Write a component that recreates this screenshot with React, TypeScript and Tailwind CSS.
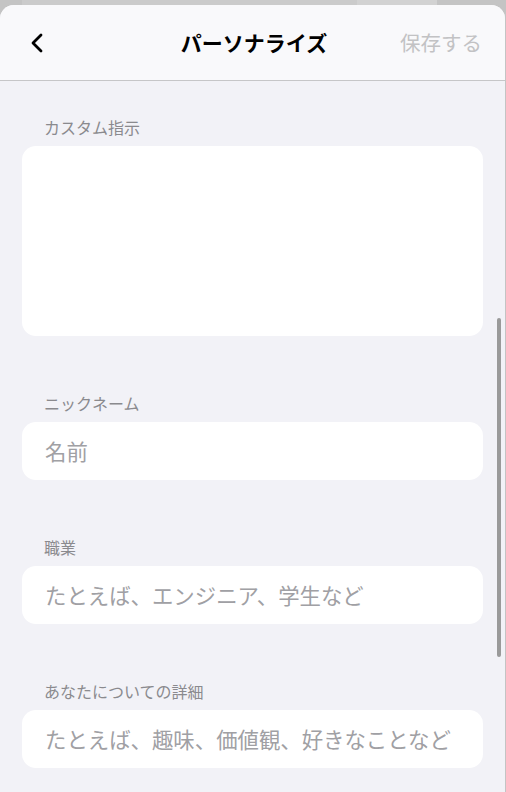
import React from "react";

type FieldProps = {
  label: string;
  placeholder?: string;
  tall?: boolean;
};

const Field = ({ label, placeholder, tall }: FieldProps) => {
  return (
    <div className="flex flex-col">
      <p className="pl-[22px] text-[16px] leading-[18px] text-[#8a8a8e]">{label}</p>
      {tall ? (
        <div className="mt-[10px] h-[190px] rounded-[14px] bg-white" />
      ) : (
        <div className="mt-[10px] flex h-[58px] items-center rounded-[14px] bg-white px-[23px]">
          <span className="text-[21.4px] leading-none text-[#a0a0a4]">{placeholder}</span>
        </div>
      )}
    </div>
  );
};

const App = () => {
  return (
    <div
      className="relative flex h-[792px] w-[506px] flex-col overflow-hidden bg-[#c4c4c4]"
      style={{ fontFamily: '"Noto Sans CJK JP", "Noto Sans", sans-serif' }}
    >
      {/* whatever sits behind the sheet, mostly hidden */}
      <div className="flex h-[5px] shrink-0">
        <div className="w-[22px] bg-[#c4c4c4]" />
        <div className="w-[335px] bg-[#cbcbcb]" />
        <div className="w-[80px] bg-[#d2d2d2]" />
        <div className="flex-1 bg-[#c4c4c4]" />
      </div>

      <div className="relative mr-[1px] flex flex-1 flex-col overflow-hidden rounded-t-[14px] bg-[#f2f2f7]">
        {/* header */}
        <div className="grid h-[76px] shrink-0 grid-cols-[1fr_auto_1fr] items-center border-b border-[#c6c6c8] bg-[#f9f9fb] pl-[26px] pr-[23px]">
          <div className="flex items-center">
            <svg width="20" height="22" viewBox="0 0 20 22" className="ml-[2px]">
              <polyline
                points="13,3 5,11 13,19"
                fill="none"
                stroke="#000"
                strokeWidth="2.8"
                strokeLinecap="round"
                strokeLinejoin="round"
              />
            </svg>
          </div>
          <h1 className="text-[21px] font-bold leading-none text-black">パーソナライズ</h1>
          <div className="flex justify-end">
            <span className="text-[20.5px] leading-none text-[#c2c2c4]">保存する</span>
          </div>
        </div>

        {/* form */}
        <div className="flex flex-col gap-[58px] px-[22px] pt-[37px]">
          <Field label="カスタム指示" tall />
          <Field label="ニックネーム" placeholder="名前" />
          <Field label="職業" placeholder="たとえば、エンジニア、学生など" />
          <Field label="あなたについての詳細" placeholder="たとえば、趣味、価値観、好きなことなど" />
        </div>

        {/* scroll indicator */}
        <div className="absolute right-[4px] top-[313px] h-[339px] w-[4px] rounded-full bg-[#9a9a9a]" />
      </div>
    </div>
  );
};

export default App;
